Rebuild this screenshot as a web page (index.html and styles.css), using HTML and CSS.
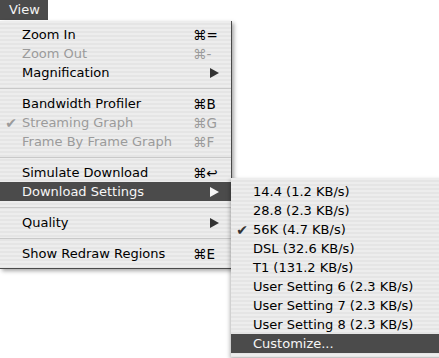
FILE: index.html
```html
<!DOCTYPE html>
<html>
<head>
<meta charset="utf-8">
<link rel="stylesheet" href="styles.css">
</head>
<body>
<div class="title">View</div>
<div class="menus">
  <div class="menu main">
    <div class="item"><span class="check"></span><span class="label">Zoom In</span><span class="key">⌘=</span></div>
    <div class="item disabled"><span class="check"></span><span class="label">Zoom Out</span><span class="key">⌘-</span></div>
    <div class="item"><span class="check"></span><span class="label">Magnification</span><span class="key arrow"><span class="tri"></span></span></div>
    <div class="sep"></div>
    <div class="item"><span class="check"></span><span class="label">Bandwidth Profiler</span><span class="key">⌘B</span></div>
    <div class="item disabled"><span class="check">✔</span><span class="label">Streaming Graph</span><span class="key">⌘G</span></div>
    <div class="item disabled"><span class="check"></span><span class="label">Frame By Frame Graph</span><span class="key">⌘F</span></div>
    <div class="sep"></div>
    <div class="item"><span class="check"></span><span class="label">Simulate Download</span><span class="key">⌘↩</span></div>
    <div class="item active"><span class="check"></span><span class="label">Download Settings</span><span class="key arrow"><span class="tri"></span></span></div>
    <div class="sep"></div>
    <div class="item"><span class="check"></span><span class="label">Quality</span><span class="key arrow"><span class="tri"></span></span></div>
    <div class="sep"></div>
    <div class="item"><span class="check"></span><span class="label">Show Redraw Regions</span><span class="key">⌘E</span></div>
  </div>
  <div class="menu sub">
    <div class="item"><span class="check"></span><span class="label">14.4 (1.2 KB/s)</span></div>
    <div class="item"><span class="check"></span><span class="label">28.8 (2.3 KB/s)</span></div>
    <div class="item"><span class="check">✔</span><span class="label">56K (4.7 KB/s)</span></div>
    <div class="item"><span class="check"></span><span class="label">DSL (32.6 KB/s)</span></div>
    <div class="item"><span class="check"></span><span class="label">T1 (131.2 KB/s)</span></div>
    <div class="item"><span class="check"></span><span class="label">User Setting 6 (2.3 KB/s)</span></div>
    <div class="item"><span class="check"></span><span class="label">User Setting 7 (2.3 KB/s)</span></div>
    <div class="item"><span class="check"></span><span class="label">User Setting 8 (2.3 KB/s)</span></div>
    <div class="item active"><span class="check"></span><span class="label">Customize...</span></div>
  </div>
</div>
</body>
</html>
```

FILE: styles.css
```css
html, body {
  margin: 0;
  padding: 0;
  background: #ffffff;
  overflow: hidden;
}
body {
  width: 439px;
  height: 358px;
  font-family: "DejaVu Sans", "Liberation Sans", sans-serif;
  font-size: 13px;
  color: #000;
}
.title {
  display: inline-block;
  vertical-align: top;
  height: 20px;
  line-height: 20px;
  padding: 0 8px 0 9px;
  background: #4b4b4b;
  color: #f4f4f4;
}
.menus {
  display: flex;
  align-items: flex-start;
  margin-top: 1px;
}
.menu {
  background: repeating-linear-gradient(to bottom, #ededed 0 2px, #e5e5e5 2px 4px);
  padding: 4px 0 5px 0;
  box-sizing: border-box;
}
.main {
  width: 232px;
  flex: none;
  border-right: 1px solid #4a4a4a;
  border-bottom: 1px solid #4a4a4a;
  box-shadow: 2px 2px 4px rgba(0, 0, 0, 0.35);
  position: relative;
  z-index: 1;
}
.sub {
  width: 215px;
  flex: none;
  margin-top: 157px;
  margin-left: -1px;
  padding: 4px 0 4px 0;
  box-shadow: -1px 2px 4px rgba(0, 0, 0, 0.3);
  position: relative;
  z-index: 2;
}
.item {
  display: flex;
  align-items: center;
  height: 19px;
  white-space: nowrap;
}
.check {
  width: 22px;
  flex: none;
  text-align: center;
  font-size: 14px;
  color: #333;
}
.label {
  flex: 1;
}
.key {
  width: 26px;
  flex: none;
  margin-right: 12px;
  font-size: 13.5px;
}
.arrow {
  display: flex;
  justify-content: flex-end;
  align-items: center;
}
.tri {
  width: 0;
  height: 0;
  border-top: 5px solid transparent;
  border-bottom: 5px solid transparent;
  border-left: 9px solid #333;
}
.disabled {
  color: #9b9b9b;
}
.disabled .check {
  color: #9b9b9b;
}
.active {
  background: #4b4b4b;
  color: #f6f6f6;
}
.active .tri {
  border-left-color: #f6f6f6;
}
.sep {
  height: 12px;
  display: flex;
  align-items: center;
}
.sep::before {
  content: "";
  display: block;
  width: 100%;
  height: 1px;
  background: #c9c9c9;
}
```
